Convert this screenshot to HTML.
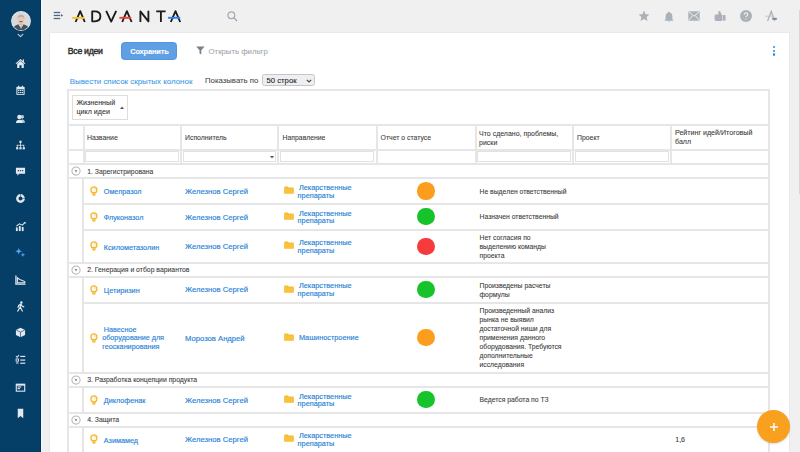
<!DOCTYPE html>
<html><head><meta charset="utf-8">
<style>
*{margin:0;padding:0;box-sizing:border-box}
html,body{width:800px;height:452px;overflow:hidden}
body{position:relative;background:#f0f0f0;font-family:"Liberation Sans",sans-serif;color:#333}
.a{position:absolute;display:block}
.t{position:absolute;white-space:nowrap;line-height:1;-webkit-text-stroke:0.08px currentColor}
.k{-webkit-text-stroke:0.14px currentColor}
</style></head><body>

<div class="a" style="left:0.00px;top:0.00px;width:41.00px;height:452.00px;background:#053e67"></div>
<div class="a" style="left:49.50px;top:32.50px;width:739.50px;height:427.50px;background:#fff;box-shadow:0 0 1px rgba(0,0,0,.18)"></div>
<div class="a" style="left:798.50px;top:10.00px;width:1.50px;height:184.00px;background:#d6d6d6"></div>
<div class="a" style="left:39.60px;top:0.00px;width:1.40px;height:452.00px;background:#03305d"></div>
<div class="a" style="left:41.00px;top:0.00px;width:1.00px;height:452.00px;background:#f8f8f8"></div>
<svg class="a" style="left:10.50px;top:11.00px;" width="20" height="20" viewBox="0 0 20 20"><defs><clipPath id="av"><circle cx="10" cy="10" r="9.3"/></clipPath></defs><circle cx="10" cy="10" r="9.9" fill="#eef0f2"/><g clip-path="url(#av)"><rect x="0" y="0" width="20" height="20" fill="#d7dadd"/><path d="M1.5 20 Q2.5 14.2 7 13.4 L13 13.4 Q17.5 14.2 18.5 20 Z" fill="#4b5056"/><path d="M7.6 13.4 L10 17.5 L12.4 13.4 Z" fill="#f4f4f4"/><path d="M9.5 14.2 L10.5 14.2 L10.6 17.4 L9.4 17.4Z" fill="#6f9cc8"/><rect x="8.6" y="11" width="2.8" height="2.8" fill="#dcb79e"/><ellipse cx="10" cy="8.7" rx="3.3" ry="3.9" fill="#e8c8b0"/><path d="M6.5 8.2 Q6.2 3.6 10 3.7 Q13.8 3.6 13.5 8.2 Q12.8 5.6 10 5.8 Q7.2 5.6 6.5 8.2Z" fill="#b9aea6"/><path d="M8.2 10.4 Q10 9.6 11.8 10.4 L11.6 11.3 Q10 10.7 8.4 11.3Z" fill="#6a5548"/></g></svg>
<svg class="a" style="left:16.90px;top:32.50px;" width="7" height="5" viewBox="0 0 7 5"><path d="M0.8 1 L3.5 3.6 L6.2 1" stroke="#a9bdd0" stroke-width="1.2" fill="none"/></svg>
<svg class="a" style="left:15.00px;top:58.10px;" width="11" height="11" viewBox="0 0 12 12"><path d="M6 1.2 L0.6 6 L1.6 6.6 L6 2.8 L10.4 6.6 L11.4 6 Z" fill="#e3e8ee"/><path d="M2.4 6.3 L6 3.4 L9.6 6.3 V11 H7.2 V8 H4.8 V11 H2.4Z" fill="#e3e8ee"/><rect x="8.4" y="1.6" width="1.4" height="2.6" fill="#e3e8ee"/></svg>
<svg class="a" style="left:15.00px;top:84.90px;" width="11" height="11" viewBox="0 0 12 12"><rect x="1.5" y="2" width="9" height="9" rx="0.8" fill="#e3e8ee"/><rect x="2.6" y="4.6" width="6.8" height="5.4" fill="#063f69"/><g fill="#e3e8ee"><rect x="3.2" y="5.2" width="1.5" height="1.3"/><rect x="5.25" y="5.2" width="1.5" height="1.3"/><rect x="7.3" y="5.2" width="1.5" height="1.3"/><rect x="3.2" y="7.6" width="1.5" height="1.3"/><rect x="5.25" y="7.6" width="1.5" height="1.3"/><rect x="7.3" y="7.6" width="1.5" height="1.3"/></g><rect x="3.3" y="0.8" width="1.2" height="2.2" fill="#e3e8ee"/><rect x="7.5" y="0.8" width="1.2" height="2.2" fill="#e3e8ee"/></svg>
<svg class="a" style="left:15.00px;top:112.50px;" width="11" height="11" viewBox="0 0 12 12"><circle cx="8" cy="4.2" r="2" fill="#e3e8ee" opacity=".8"/><path d="M5.5 10.5 Q6 7 8 7 Q10.4 7 11 10.5Z" fill="#e3e8ee" opacity=".8"/><circle cx="4.8" cy="4.4" r="2.4" fill="#e3e8ee"/><path d="M1 10.8 Q1.3 7.3 4.8 7.3 Q8.3 7.3 8.6 10.8Z" fill="#e3e8ee"/></svg>
<svg class="a" style="left:15.00px;top:139.50px;" width="11" height="11" viewBox="0 0 12 12"><g fill="#e3e8ee"><rect x="4.8" y="0.8" width="2.4" height="2.4"/><rect x="5.6" y="3" width="0.8" height="2.6"/><rect x="2" y="5.3" width="8" height="0.8"/><rect x="2" y="5.3" width="0.8" height="2.5"/><rect x="9.2" y="5.3" width="0.8" height="2.5"/><rect x="5.6" y="5.3" width="0.8" height="2.5"/><rect x="1.2" y="7.8" width="2.4" height="2.4"/><rect x="4.8" y="7.8" width="2.4" height="2.4"/><rect x="8.4" y="7.8" width="2.4" height="2.4"/></g></svg>
<svg class="a" style="left:15.00px;top:166.00px;" width="11" height="11" viewBox="0 0 12 12"><path d="M1 1.8 H11 V8.4 H4.6 L2.6 10.6 V8.4 H1Z" fill="#e3e8ee"/><g fill="#063f69"><rect x="3" y="4.5" width="1.4" height="1.2"/><rect x="5.3" y="4.5" width="1.4" height="1.2"/><rect x="7.6" y="4.5" width="1.4" height="1.2"/></g></svg>
<svg class="a" style="left:15.00px;top:193.30px;" width="11" height="11" viewBox="0 0 12 12"><circle cx="6" cy="6" r="3.5" stroke="#e3e8ee" stroke-width="2.6" fill="none"/><path d="M6 1 V4 M8 6 H11" stroke="#053e67" stroke-width="0.6"/></svg>
<svg class="a" style="left:15.00px;top:220.70px;" width="11" height="11" viewBox="0 0 12 12"><g fill="#e3e8ee"><rect x="1" y="7" width="2" height="4"/><rect x="4.2" y="5.5" width="2" height="5.5"/><rect x="7.4" y="6.5" width="2" height="4.5"/></g><path d="M1.5 5.5 L4.8 3 L8 4.6 L11 1.5" stroke="#e3e8ee" stroke-width="1.1" fill="none"/><path d="M9.2 1 H11.5 V3.3Z" fill="#e3e8ee"/></svg>
<svg class="a" style="left:15.00px;top:247.30px;" width="11" height="11" viewBox="0 0 12 12"><path d="M4 1 L5 3.6 L7.6 4.6 L5 5.6 L4 8.2 L3 5.6 L0.4 4.6 L3 3.6Z" fill="#4ea6f2"/><path d="M8.6 6 L9.3 7.8 L11.1 8.5 L9.3 9.2 L8.6 11 L7.9 9.2 L6.1 8.5 L7.9 7.8Z" fill="#4ea6f2"/></svg>
<svg class="a" style="left:15.00px;top:274.00px;" width="11" height="11" viewBox="0 0 12 12"><path d="M1 1.5 V11 H11.5" stroke="#e3e8ee" stroke-width="1.4" fill="none"/><path d="M2.6 9.6 V4.2 L5 6 L8 7.2 L10.6 8.2 V9.6Z" stroke="#e3e8ee" stroke-width="1.2" fill="none"/></svg>
<svg class="a" style="left:15.00px;top:300.50px;" width="11" height="11" viewBox="0 0 12 12"><circle cx="7" cy="1.6" r="1.3" fill="#e3e8ee"/><path d="M6.4 3.2 L4 4.8 L3.4 7 M6.4 3.2 L5.4 7.2 L3 11 M5.6 6.2 L8 11 M6.6 3.6 L7.6 5.6 L9.6 6.4" stroke="#e3e8ee" stroke-width="1.3" fill="none" stroke-linecap="round"/></svg>
<svg class="a" style="left:15.00px;top:327.30px;" width="11" height="11" viewBox="0 0 12 12"><path d="M6 0.8 L11 3.2 V8.8 L6 11.2 L1 8.8 V3.2Z" fill="#e3e8ee"/><path d="M1.4 3.4 L6 5.6 L10.6 3.4 M6 5.6 V11" stroke="#063f69" stroke-width="0.7" fill="none"/></svg>
<svg class="a" style="left:15.00px;top:354.30px;" width="11" height="11" viewBox="0 0 12 12"><path d="M1 2.4 L2.3 3.6 L4.4 1.2" stroke="#e3e8ee" stroke-width="1.1" fill="none"/><rect x="5.8" y="2" width="5.4" height="1.3" fill="#e3e8ee"/><rect x="1.2" y="5.4" width="2.6" height="2.4" stroke="#e3e8ee" stroke-width="1" fill="none"/><rect x="5.8" y="6" width="5.4" height="1.3" fill="#e3e8ee"/><rect x="1.2" y="9.2" width="2.6" height="1.2" fill="#e3e8ee"/><rect x="5.8" y="9.4" width="5.4" height="1.3" fill="#e3e8ee"/></svg>
<svg class="a" style="left:15.00px;top:381.50px;" width="11" height="11" viewBox="0 0 12 12"><rect x="0.8" y="1.8" width="10.4" height="8.8" fill="#e3e8ee"/><rect x="2" y="4" width="8" height="5.4" fill="#063f69"/><rect x="2.8" y="4.8" width="4" height="1.2" fill="#e3e8ee"/><rect x="2.8" y="6.6" width="2.6" height="1.2" fill="#e3e8ee"/></svg>
<svg class="a" style="left:15.00px;top:408.00px;" width="11" height="11" viewBox="0 0 12 12"><path d="M3 0.8 H9 V11.2 L6 8.6 L3 11.2Z" fill="#e3e8ee"/></svg>
<svg class="a" style="left:53.00px;top:11.10px;" width="11" height="9" viewBox="0 0 11 9"><g stroke="#4f6780" stroke-width="1.3" fill="none"><path d="M0.75 1.5 H7.2"/><path d="M0.75 4.45 H7.2"/><path d="M0.75 7.5 H7.2"/></g><path d="M8 3.1 L10.2 4.45 L8 5.8Z" fill="#4f6780"/></svg>
<svg class="a" style="left:0;top:0" width="200" height="32" viewBox="0 0 200 32"><g stroke="#1b1b1b" stroke-width="1.85" fill="none" stroke-linejoin="round" stroke-linecap="butt"><path d="M75.6 22 L80.2 11.2 L84.8 22"/><path d="M92.2 11.3 V21.3 H94.8 Q100.4 21.3 100.4 16.3 Q100.4 11.3 94.8 11.3Z"/><path d="M106.2 10.8 L111.2 21.6 L116.2 10.8"/><path d="M122.2 22 L126.9 11.2 L131.6 22"/><path d="M140.4 22 V11.4 L148.4 21.4 V10.8"/><path d="M156.2 11.3 H165.6 M160.9 11.3 V22"/><path d="M170.8 22 L175.5 11.2 L180.2 22"/></g><path d="M72.2 17.9 H84.2" stroke="#f6c31b" stroke-width="1.9"/><path d="M119.4 17.8 H131.2" stroke="#ef3e2e" stroke-width="1.9"/><path d="M168 17.8 H180.2" stroke="#2f7ff0" stroke-width="1.9"/></svg>
<svg class="a" style="left:227.00px;top:10.50px;" width="11" height="11" viewBox="0 0 11 11"><circle cx="4.3" cy="4.3" r="3.4" stroke="#a3acb5" stroke-width="1.3" fill="none"/><path d="M6.8 6.8 L10 10" stroke="#a3acb5" stroke-width="1.5"/></svg>
<svg class="a" style="left:638.00px;top:10.20px;" width="12" height="12" viewBox="0 0 12 12"><path d="M6 0.6 L7.6 4.2 L11.5 4.5 L8.6 7.1 L9.5 11 L6 8.9 L2.5 11 L3.4 7.1 L0.5 4.5 L4.4 4.2Z" fill="#aab1b9"/></svg>
<svg class="a" style="left:663.20px;top:10.80px;" width="12" height="12" viewBox="0 0 12 12"><path d="M6 0.8 Q6.9 0.8 7 1.8 Q9.4 2.5 9.4 5.8 V8.2 L10.8 9.8 H1.2 L2.6 8.2 V5.8 Q2.6 2.5 5 1.8 Q5.1 0.8 6 0.8Z" fill="#aab1b9"/><path d="M4.8 10.4 Q6 12 7.2 10.4Z" fill="#aab1b9"/></svg>
<svg class="a" style="left:688.00px;top:10.20px;" width="12" height="12" viewBox="0 0 12 12"><rect x="0.3" y="1.3" width="11.4" height="9.4" fill="#aab1b9"/><path d="M0.5 1.6 L6 6.2 L11.5 1.6 M0.5 10.4 L4.6 5.6 M11.5 10.4 L7.4 5.6" stroke="#f0f0f0" stroke-width="1.0" fill="none"/></svg>
<svg class="a" style="left:714.00px;top:10.20px;" width="12" height="12" viewBox="0 0 12 12"><rect x="8.7" y="5" width="2.8" height="5.6" fill="#aab1b9"/><path d="M0.6 6 Q0.6 4.6 2 4.6 H4.4 L4.3 2 Q4.3 1 5.3 1 Q6.3 1 6.5 2 L7.4 4.6 Q8.2 4.8 8.2 5.6 V10.2 Q8.2 11 7.4 11 H2 Q0.6 11 0.6 9.6Z" fill="#aab1b9"/></svg>
<svg class="a" style="left:739.80px;top:10.20px;" width="12" height="12" viewBox="0 0 12 12"><circle cx="6" cy="6" r="6" fill="#aab1b9"/><path d="M4.3 4.7 Q4.3 2.9 6 2.9 Q7.7 2.9 7.7 4.4 Q7.7 5.4 6.6 6 Q6 6.3 6 7.3" stroke="#f0f0f0" stroke-width="1.1" fill="none"/><circle cx="6" cy="9.1" r="0.7" fill="#f0f0f0"/></svg>
<svg class="a" style="left:765.20px;top:10.20px;" width="12" height="12" viewBox="0 0 12 12"><path d="M2.6 11 L6.2 1.4 L9.8 11" stroke="#aab1b9" stroke-width="1.3" fill="none"/><path d="M0.2 6.2 H7.4" stroke="#b9bfc6" stroke-width="0.8"/><rect x="7.2" y="7.8" width="4.6" height="2" fill="#7f8b97"/></svg>
<div class="t" style="left:67.80px;top:46.94px;font-size:8.7px;color:#2a2a2a;font-weight:normal;letter-spacing:-0.28px;-webkit-text-stroke:0.38px #2a2a2a">Все идеи</div>
<div class="a" style="left:121.20px;top:42.00px;width:56.00px;height:17.80px;background:#5f9fe3;border:1px solid #5196de;border-radius:3.5px"></div>
<div class="t" style="left:130.20px;top:48.19px;font-size:7.45px;color:#ffffff;font-weight:bold;letter-spacing:-0.15px;">Сохранить</div>
<svg class="a" style="left:195.60px;top:45.60px;" width="9" height="9" viewBox="0 0 9 9"><path d="M0.2 0.4 H8.6 L5.3 4.2 V8.6 L3.5 7.4 V4.2Z" fill="#75838f"/></svg>
<div class="t" style="left:208.60px;top:47.54px;font-size:7.75px;color:#a0a6ad;font-weight:normal;letter-spacing:0px;">Открыть фильтр</div>
<div class="a" style="left:772.80px;top:46.15px;width:2.30px;height:2.30px;background:#2190f0;border-radius:50%"></div>
<div class="a" style="left:772.80px;top:49.75px;width:2.30px;height:2.30px;background:#2190f0;border-radius:50%"></div>
<div class="a" style="left:772.80px;top:53.35px;width:2.30px;height:2.30px;background:#2190f0;border-radius:50%"></div>
<div class="t" style="left:69.70px;top:77.59px;font-size:7.93px;color:#3d9be6;font-weight:normal;letter-spacing:0px;">Вывести список скрытых колонок</div>
<div class="t" style="left:205.00px;top:77.21px;font-size:7.78px;color:#4a4a4a;font-weight:normal;letter-spacing:0px;">Показывать по</div>
<div class="a" style="left:262.20px;top:74.10px;width:52.60px;height:12.40px;background:#efeff1;border:1px solid #c6c6ca;border-radius:2.5px"></div>
<div class="t" style="left:266.50px;top:77.47px;font-size:7.72px;color:#222;font-weight:normal;letter-spacing:0px;">50 строк</div>
<svg class="a" style="left:305.60px;top:79.00px;" width="6" height="4" viewBox="0 0 6 4"><path d="M0.8 0.8 L3 3 L5.2 0.8" stroke="#4a4a4a" stroke-width="1.15" fill="none"/></svg>
<div class="a" style="left:68.00px;top:89.30px;width:701.30px;height:2px;background:#e6e6e6"></div>
<div class="a" style="left:67.00px;top:89.30px;width:2px;height:370.70px;background:#e6e6e6"></div>
<div class="a" style="left:768.30px;top:89.30px;width:2px;height:370.70px;background:#e6e6e6"></div>
<div class="a" style="left:71.90px;top:94.80px;width:56.10px;height:25.40px;border:1px solid #dedede;background:#fff"></div>
<div class="t" style="left:76.40px;top:99.85px;font-size:7.15px;color:#333;font-weight:normal;letter-spacing:0px;">Жизненный</div>
<div class="t" style="left:76.40px;top:108.55px;font-size:7.15px;color:#333;font-weight:normal;letter-spacing:0px;">цикл идеи</div>
<svg class="a" style="left:120.10px;top:105.60px;" width="4" height="3" viewBox="0 0 4 3"><path d="M0 3 L2 0.6 L4 3Z" fill="#555"/></svg>
<div class="a" style="left:68.00px;top:123.80px;width:701.30px;height:2px;background:#e6e6e6"></div>
<div class="a" style="left:68.00px;top:148.60px;width:701.30px;height:2px;background:#e6e6e6"></div>
<div class="a" style="left:68.00px;top:162.90px;width:701.30px;height:2px;background:#e6e6e6"></div>
<div class="a" style="left:82.50px;top:124.80px;width:2px;height:39.30px;background:#e6e6e6"></div>
<div class="a" style="left:180.30px;top:124.80px;width:2px;height:39.30px;background:#e6e6e6"></div>
<div class="a" style="left:277.40px;top:124.80px;width:2px;height:39.30px;background:#e6e6e6"></div>
<div class="a" style="left:375.60px;top:124.80px;width:2px;height:39.30px;background:#e6e6e6"></div>
<div class="a" style="left:474.50px;top:124.80px;width:2px;height:39.30px;background:#e6e6e6"></div>
<div class="a" style="left:571.90px;top:124.80px;width:2px;height:39.30px;background:#e6e6e6"></div>
<div class="a" style="left:670.00px;top:124.80px;width:2px;height:39.30px;background:#e6e6e6"></div>
<div class="t" style="left:87.00px;top:134.68px;font-size:6.88px;color:#3b3b3b;font-weight:normal;letter-spacing:0px;">Название</div>
<div class="t" style="left:185.00px;top:134.68px;font-size:6.88px;color:#3b3b3b;font-weight:normal;letter-spacing:0px;">Исполнитель</div>
<div class="t" style="left:282.50px;top:134.68px;font-size:6.88px;color:#3b3b3b;font-weight:normal;letter-spacing:0px;">Направление</div>
<div class="t" style="left:380.60px;top:134.68px;font-size:6.88px;color:#3b3b3b;font-weight:normal;letter-spacing:0px;">Отчет о статусе</div>
<div class="t" style="left:479.10px;top:130.49px;font-size:6.98px;color:#3b3b3b;font-weight:normal;letter-spacing:0px;">Что сделано, проблемы,</div>
<div class="t" style="left:479.10px;top:139.24px;font-size:6.98px;color:#3b3b3b;font-weight:normal;letter-spacing:0px;">риски</div>
<div class="t" style="left:577.00px;top:134.68px;font-size:6.88px;color:#3b3b3b;font-weight:normal;letter-spacing:0px;">Проект</div>
<div class="t" style="left:675.00px;top:130.29px;font-size:7.1px;color:#3b3b3b;font-weight:normal;letter-spacing:0px;">Рейтинг идей/Итоговый</div>
<div class="t" style="left:675.00px;top:138.99px;font-size:7.1px;color:#3b3b3b;font-weight:normal;letter-spacing:0px;">балл</div>
<div class="a" style="left:85.40px;top:151.30px;width:93.80px;height:11.10px;border:1px solid #e2e2e2;background:#fff"></div>
<div class="a" style="left:183.20px;top:151.30px;width:93.30px;height:11.10px;border:1px solid #e2e2e2;background:#fff"></div>
<svg class="a" style="left:269.50px;top:155.80px;" width="4" height="3" viewBox="0 0 4 3"><path d="M0 0 L4 0 L2 2.6Z" fill="#555"/></svg>
<div class="a" style="left:280.30px;top:151.30px;width:94.20px;height:11.10px;border:1px solid #e2e2e2;background:#fff"></div>
<div class="a" style="left:477.40px;top:151.30px;width:93.60px;height:11.10px;border:1px solid #e2e2e2;background:#fff"></div>
<div class="a" style="left:574.80px;top:151.30px;width:94.20px;height:11.10px;border:1px solid #e2e2e2;background:#fff"></div>
<div class="a" style="left:68.00px;top:162.90px;width:701.30px;height:2px;background:#e6e6e6"></div>
<div class="a" style="left:68.00px;top:177.25px;width:701.30px;height:2px;background:#e6e6e6"></div>
<svg class="a" style="left:70.80px;top:166.07px;" width="10" height="10" viewBox="0 0 10 10"><circle cx="5" cy="5" r="4.1" stroke="#b9b9b9" stroke-width="1.05" fill="none"/><path d="M3.4 3.6 L6.4 4.4 L5 6.6Z" fill="#8a8a8a"/></svg>
<div class="t" style="left:87.20px;top:168.58px;font-size:6.85px;color:#3a3a3a;font-weight:normal;letter-spacing:0px;">1. Зарегистрирована</div>
<div class="a" style="left:83.20px;top:202.70px;width:686.10px;height:2px;background:#e6e6e6"></div>
<div class="a" style="left:82.20px;top:178.25px;width:2px;height:25.45px;background:#e6e6e6"></div>
<svg class="a" style="left:90.00px;top:185.97px;" width="8" height="10" viewBox="0 0 8 10"><circle cx="3.9" cy="3.9" r="3.0" stroke="#f7b52b" stroke-width="1.25" fill="#fffaf0"/><path d="M2.3 6.2 H5.5 V9 Q5.5 9.8 3.9 9.8 Q2.3 9.8 2.3 9Z" fill="#f7b52b"/><path d="M2.4 7.9 H5.4" stroke="#fff4d8" stroke-width="0.45"/><path d="M4.0 2.2 Q5.4 2.3 5.5 3.6" stroke="#f7c04d" stroke-width="0.6" fill="none"/></svg>
<div class="t k" style="left:103.80px;top:188.46px;font-size:7.22px;color:#1f82d6;font-weight:normal;letter-spacing:0px;">Омепразол</div>
<div class="t k" style="left:185.00px;top:187.79px;font-size:7.66px;color:#1f82d6;font-weight:normal;letter-spacing:0px;">Железнов Сергей</div>
<svg class="a" style="left:284.30px;top:186.17px;" width="10" height="8" viewBox="0 0 10 8"><path d="M0.3 0.6 H3.8 L4.8 1.6 H9.7 V7.6 H0.3Z" fill="#f7bb33"/><rect x="0.3" y="2.4" width="9.4" height="5.2" fill="#f9c23c"/></svg>
<div class="t k" style="left:298.90px;top:183.72px;font-size:7.33px;color:#1f82d6;font-weight:normal;letter-spacing:0px;">Лекарственные</div>
<div class="t k" style="left:297.60px;top:191.62px;font-size:7.33px;color:#1f82d6;font-weight:normal;letter-spacing:0px;">препараты</div>
<div class="a" style="left:417.40px;top:182.38px;width:17.2px;height:17.2px;border-radius:50%;background:#fd9d1d"></div>
<div class="t" style="left:479.50px;top:188.50px;font-size:6.82px;color:#3a3a3a;font-weight:normal;letter-spacing:0px;">Не выделен ответственный</div>
<div class="a" style="left:83.20px;top:228.80px;width:686.10px;height:2px;background:#e6e6e6"></div>
<div class="a" style="left:82.20px;top:203.70px;width:2px;height:26.10px;background:#e6e6e6"></div>
<svg class="a" style="left:90.00px;top:211.75px;" width="8" height="10" viewBox="0 0 8 10"><circle cx="3.9" cy="3.9" r="3.0" stroke="#f7b52b" stroke-width="1.25" fill="#fffaf0"/><path d="M2.3 6.2 H5.5 V9 Q5.5 9.8 3.9 9.8 Q2.3 9.8 2.3 9Z" fill="#f7b52b"/><path d="M2.4 7.9 H5.4" stroke="#fff4d8" stroke-width="0.45"/><path d="M4.0 2.2 Q5.4 2.3 5.5 3.6" stroke="#f7c04d" stroke-width="0.6" fill="none"/></svg>
<div class="t k" style="left:103.80px;top:214.24px;font-size:7.22px;color:#1f82d6;font-weight:normal;letter-spacing:0px;">Флуконазол</div>
<div class="t k" style="left:185.00px;top:213.57px;font-size:7.66px;color:#1f82d6;font-weight:normal;letter-spacing:0px;">Железнов Сергей</div>
<svg class="a" style="left:284.30px;top:211.95px;" width="10" height="8" viewBox="0 0 10 8"><path d="M0.3 0.6 H3.8 L4.8 1.6 H9.7 V7.6 H0.3Z" fill="#f7bb33"/><rect x="0.3" y="2.4" width="9.4" height="5.2" fill="#f9c23c"/></svg>
<div class="t k" style="left:298.90px;top:209.50px;font-size:7.33px;color:#1f82d6;font-weight:normal;letter-spacing:0px;">Лекарственные</div>
<div class="t k" style="left:297.60px;top:217.40px;font-size:7.33px;color:#1f82d6;font-weight:normal;letter-spacing:0px;">препараты</div>
<div class="a" style="left:417.40px;top:208.15px;width:17.2px;height:17.2px;border-radius:50%;background:#16c32a"></div>
<div class="t" style="left:479.50px;top:214.28px;font-size:6.82px;color:#3a3a3a;font-weight:normal;letter-spacing:0px;">Назначен ответственный</div>
<div class="a" style="left:83.20px;top:261.60px;width:686.10px;height:2px;background:#e6e6e6"></div>
<div class="a" style="left:82.20px;top:229.80px;width:2px;height:32.80px;background:#e6e6e6"></div>
<svg class="a" style="left:90.00px;top:241.20px;" width="8" height="10" viewBox="0 0 8 10"><circle cx="3.9" cy="3.9" r="3.0" stroke="#f7b52b" stroke-width="1.25" fill="#fffaf0"/><path d="M2.3 6.2 H5.5 V9 Q5.5 9.8 3.9 9.8 Q2.3 9.8 2.3 9Z" fill="#f7b52b"/><path d="M2.4 7.9 H5.4" stroke="#fff4d8" stroke-width="0.45"/><path d="M4.0 2.2 Q5.4 2.3 5.5 3.6" stroke="#f7c04d" stroke-width="0.6" fill="none"/></svg>
<div class="t k" style="left:103.80px;top:243.69px;font-size:7.22px;color:#1f82d6;font-weight:normal;letter-spacing:0px;">Ксилометазолин</div>
<div class="t k" style="left:185.00px;top:243.02px;font-size:7.66px;color:#1f82d6;font-weight:normal;letter-spacing:0px;">Железнов Сергей</div>
<svg class="a" style="left:284.30px;top:241.40px;" width="10" height="8" viewBox="0 0 10 8"><path d="M0.3 0.6 H3.8 L4.8 1.6 H9.7 V7.6 H0.3Z" fill="#f7bb33"/><rect x="0.3" y="2.4" width="9.4" height="5.2" fill="#f9c23c"/></svg>
<div class="t k" style="left:298.90px;top:238.95px;font-size:7.33px;color:#1f82d6;font-weight:normal;letter-spacing:0px;">Лекарственные</div>
<div class="t k" style="left:297.60px;top:246.85px;font-size:7.33px;color:#1f82d6;font-weight:normal;letter-spacing:0px;">препараты</div>
<div class="a" style="left:417.40px;top:237.60px;width:17.2px;height:17.2px;border-radius:50%;background:#f73b3d"></div>
<div class="t" style="left:479.50px;top:234.65px;font-size:6.82px;color:#3a3a3a;font-weight:normal;letter-spacing:0px;">Нет согласия по</div>
<div class="t" style="left:479.50px;top:243.73px;font-size:6.82px;color:#3a3a3a;font-weight:normal;letter-spacing:0px;">выделению команды</div>
<div class="t" style="left:479.50px;top:252.81px;font-size:6.82px;color:#3a3a3a;font-weight:normal;letter-spacing:0px;">проекта</div>
<div class="a" style="left:68.00px;top:261.60px;width:701.30px;height:2px;background:#e6e6e6"></div>
<div class="a" style="left:68.00px;top:275.80px;width:701.30px;height:2px;background:#e6e6e6"></div>
<svg class="a" style="left:70.80px;top:264.70px;" width="10" height="10" viewBox="0 0 10 10"><circle cx="5" cy="5" r="4.1" stroke="#b9b9b9" stroke-width="1.05" fill="none"/><path d="M3.4 3.6 L6.4 4.4 L5 6.6Z" fill="#8a8a8a"/></svg>
<div class="t" style="left:87.20px;top:267.20px;font-size:6.85px;color:#3a3a3a;font-weight:normal;letter-spacing:0px;">2. Генерация и отбор вариантов</div>
<div class="a" style="left:83.20px;top:301.55px;width:686.10px;height:2px;background:#e6e6e6"></div>
<div class="a" style="left:82.20px;top:276.80px;width:2px;height:25.75px;background:#e6e6e6"></div>
<svg class="a" style="left:90.00px;top:284.68px;" width="8" height="10" viewBox="0 0 8 10"><circle cx="3.9" cy="3.9" r="3.0" stroke="#f7b52b" stroke-width="1.25" fill="#fffaf0"/><path d="M2.3 6.2 H5.5 V9 Q5.5 9.8 3.9 9.8 Q2.3 9.8 2.3 9Z" fill="#f7b52b"/><path d="M2.4 7.9 H5.4" stroke="#fff4d8" stroke-width="0.45"/><path d="M4.0 2.2 Q5.4 2.3 5.5 3.6" stroke="#f7c04d" stroke-width="0.6" fill="none"/></svg>
<div class="t k" style="left:103.80px;top:287.16px;font-size:7.22px;color:#1f82d6;font-weight:normal;letter-spacing:0px;">Цетиризин</div>
<div class="t k" style="left:185.00px;top:286.49px;font-size:7.66px;color:#1f82d6;font-weight:normal;letter-spacing:0px;">Железнов Сергей</div>
<svg class="a" style="left:284.30px;top:284.88px;" width="10" height="8" viewBox="0 0 10 8"><path d="M0.3 0.6 H3.8 L4.8 1.6 H9.7 V7.6 H0.3Z" fill="#f7bb33"/><rect x="0.3" y="2.4" width="9.4" height="5.2" fill="#f9c23c"/></svg>
<div class="t k" style="left:298.90px;top:282.42px;font-size:7.33px;color:#1f82d6;font-weight:normal;letter-spacing:0px;">Лекарственные</div>
<div class="t k" style="left:297.60px;top:290.32px;font-size:7.33px;color:#1f82d6;font-weight:normal;letter-spacing:0px;">препараты</div>
<div class="a" style="left:417.40px;top:281.07px;width:17.2px;height:17.2px;border-radius:50%;background:#16c32a"></div>
<div class="t" style="left:479.50px;top:282.66px;font-size:6.82px;color:#3a3a3a;font-weight:normal;letter-spacing:0px;">Произведены расчеты</div>
<div class="t" style="left:479.50px;top:291.74px;font-size:6.82px;color:#3a3a3a;font-weight:normal;letter-spacing:0px;">формулы</div>
<div class="a" style="left:83.20px;top:371.85px;width:686.10px;height:2px;background:#e6e6e6"></div>
<div class="a" style="left:82.20px;top:302.55px;width:2px;height:70.30px;background:#e6e6e6"></div>
<svg class="a" style="left:90.00px;top:332.70px;" width="8" height="10" viewBox="0 0 8 10"><circle cx="3.9" cy="3.9" r="3.0" stroke="#f7b52b" stroke-width="1.25" fill="#fffaf0"/><path d="M2.3 6.2 H5.5 V9 Q5.5 9.8 3.9 9.8 Q2.3 9.8 2.3 9Z" fill="#f7b52b"/><path d="M2.4 7.9 H5.4" stroke="#fff4d8" stroke-width="0.45"/><path d="M4.0 2.2 Q5.4 2.3 5.5 3.6" stroke="#f7c04d" stroke-width="0.6" fill="none"/></svg>
<div class="t k" style="left:103.80px;top:325.99px;font-size:7.22px;color:#1f82d6;font-weight:normal;letter-spacing:0px;">Навесное</div>
<div class="t k" style="left:102.20px;top:334.39px;font-size:7.22px;color:#1f82d6;font-weight:normal;letter-spacing:0px;">оборудование для</div>
<div class="t k" style="left:102.20px;top:342.79px;font-size:7.22px;color:#1f82d6;font-weight:normal;letter-spacing:0px;">геосканирования</div>
<div class="t k" style="left:185.00px;top:334.52px;font-size:7.66px;color:#1f82d6;font-weight:normal;letter-spacing:0px;">Морозов Андрей</div>
<svg class="a" style="left:284.30px;top:332.90px;" width="10" height="8" viewBox="0 0 10 8"><path d="M0.3 0.6 H3.8 L4.8 1.6 H9.7 V7.6 H0.3Z" fill="#f7bb33"/><rect x="0.3" y="2.4" width="9.4" height="5.2" fill="#f9c23c"/></svg>
<div class="t k" style="left:298.90px;top:334.10px;font-size:7.33px;color:#1f82d6;font-weight:normal;letter-spacing:0px;">Машиностроение</div>
<div class="a" style="left:417.40px;top:329.10px;width:17.2px;height:17.2px;border-radius:50%;background:#fd9d1d"></div>
<div class="t" style="left:479.50px;top:307.99px;font-size:6.82px;color:#3a3a3a;font-weight:normal;letter-spacing:0px;">Произведенный анализ</div>
<div class="t" style="left:479.50px;top:317.07px;font-size:6.82px;color:#3a3a3a;font-weight:normal;letter-spacing:0px;">рынка не выявил</div>
<div class="t" style="left:479.50px;top:326.15px;font-size:6.82px;color:#3a3a3a;font-weight:normal;letter-spacing:0px;">достаточной ниши для</div>
<div class="t" style="left:479.50px;top:335.23px;font-size:6.82px;color:#3a3a3a;font-weight:normal;letter-spacing:0px;">применения данного</div>
<div class="t" style="left:479.50px;top:344.31px;font-size:6.82px;color:#3a3a3a;font-weight:normal;letter-spacing:0px;">оборудования. Требуются</div>
<div class="t" style="left:479.50px;top:353.39px;font-size:6.82px;color:#3a3a3a;font-weight:normal;letter-spacing:0px;">дополнительные</div>
<div class="t" style="left:479.50px;top:362.47px;font-size:6.82px;color:#3a3a3a;font-weight:normal;letter-spacing:0px;">исследования</div>
<div class="a" style="left:68.00px;top:371.85px;width:701.30px;height:2px;background:#e6e6e6"></div>
<div class="a" style="left:68.00px;top:385.90px;width:701.30px;height:2px;background:#e6e6e6"></div>
<svg class="a" style="left:70.80px;top:374.88px;" width="10" height="10" viewBox="0 0 10 10"><circle cx="5" cy="5" r="4.1" stroke="#b9b9b9" stroke-width="1.05" fill="none"/><path d="M3.4 3.6 L6.4 4.4 L5 6.6Z" fill="#8a8a8a"/></svg>
<div class="t" style="left:87.20px;top:377.38px;font-size:6.85px;color:#3a3a3a;font-weight:normal;letter-spacing:0px;">3. Разработка концепции продукта</div>
<div class="a" style="left:83.20px;top:411.60px;width:686.10px;height:2px;background:#e6e6e6"></div>
<div class="a" style="left:82.20px;top:386.90px;width:2px;height:25.70px;background:#e6e6e6"></div>
<svg class="a" style="left:90.00px;top:394.75px;" width="8" height="10" viewBox="0 0 8 10"><circle cx="3.9" cy="3.9" r="3.0" stroke="#f7b52b" stroke-width="1.25" fill="#fffaf0"/><path d="M2.3 6.2 H5.5 V9 Q5.5 9.8 3.9 9.8 Q2.3 9.8 2.3 9Z" fill="#f7b52b"/><path d="M2.4 7.9 H5.4" stroke="#fff4d8" stroke-width="0.45"/><path d="M4.0 2.2 Q5.4 2.3 5.5 3.6" stroke="#f7c04d" stroke-width="0.6" fill="none"/></svg>
<div class="t k" style="left:103.80px;top:397.24px;font-size:7.22px;color:#1f82d6;font-weight:normal;letter-spacing:0px;">Диклофенак</div>
<div class="t k" style="left:185.00px;top:396.57px;font-size:7.66px;color:#1f82d6;font-weight:normal;letter-spacing:0px;">Железнов Сергей</div>
<svg class="a" style="left:284.30px;top:394.95px;" width="10" height="8" viewBox="0 0 10 8"><path d="M0.3 0.6 H3.8 L4.8 1.6 H9.7 V7.6 H0.3Z" fill="#f7bb33"/><rect x="0.3" y="2.4" width="9.4" height="5.2" fill="#f9c23c"/></svg>
<div class="t k" style="left:298.90px;top:392.50px;font-size:7.33px;color:#1f82d6;font-weight:normal;letter-spacing:0px;">Лекарственные</div>
<div class="t k" style="left:297.60px;top:400.40px;font-size:7.33px;color:#1f82d6;font-weight:normal;letter-spacing:0px;">препараты</div>
<div class="a" style="left:417.40px;top:391.15px;width:17.2px;height:17.2px;border-radius:50%;background:#16c32a"></div>
<div class="t" style="left:479.50px;top:397.28px;font-size:6.82px;color:#3a3a3a;font-weight:normal;letter-spacing:0px;">Ведется работа по ТЗ</div>
<div class="a" style="left:68.00px;top:411.60px;width:701.30px;height:2px;background:#e6e6e6"></div>
<div class="a" style="left:68.00px;top:425.60px;width:701.30px;height:2px;background:#e6e6e6"></div>
<svg class="a" style="left:70.80px;top:414.60px;" width="10" height="10" viewBox="0 0 10 10"><circle cx="5" cy="5" r="4.1" stroke="#b9b9b9" stroke-width="1.05" fill="none"/><path d="M3.4 3.6 L6.4 4.4 L5 6.6Z" fill="#8a8a8a"/></svg>
<div class="t" style="left:87.20px;top:417.10px;font-size:6.85px;color:#3a3a3a;font-weight:normal;letter-spacing:0px;">4. Защита</div>
<div class="a" style="left:82.20px;top:426.60px;width:2px;height:33.40px;background:#e6e6e6"></div>
<svg class="a" style="left:90.00px;top:434.10px;" width="8" height="10" viewBox="0 0 8 10"><circle cx="3.9" cy="3.9" r="3.0" stroke="#f7b52b" stroke-width="1.25" fill="#fffaf0"/><path d="M2.3 6.2 H5.5 V9 Q5.5 9.8 3.9 9.8 Q2.3 9.8 2.3 9Z" fill="#f7b52b"/><path d="M2.4 7.9 H5.4" stroke="#fff4d8" stroke-width="0.45"/><path d="M4.0 2.2 Q5.4 2.3 5.5 3.6" stroke="#f7c04d" stroke-width="0.6" fill="none"/></svg>
<div class="t k" style="left:103.80px;top:436.59px;font-size:7.22px;color:#1f82d6;font-weight:normal;letter-spacing:0px;">Азимамед</div>
<div class="t k" style="left:185.00px;top:435.92px;font-size:7.66px;color:#1f82d6;font-weight:normal;letter-spacing:0px;">Железнов Сергей</div>
<svg class="a" style="left:284.30px;top:434.30px;" width="10" height="8" viewBox="0 0 10 8"><path d="M0.3 0.6 H3.8 L4.8 1.6 H9.7 V7.6 H0.3Z" fill="#f7bb33"/><rect x="0.3" y="2.4" width="9.4" height="5.2" fill="#f9c23c"/></svg>
<div class="t k" style="left:298.90px;top:432.05px;font-size:7.33px;color:#1f82d6;font-weight:normal;letter-spacing:0px;">Лекарственные</div>
<div class="t k" style="left:297.60px;top:439.95px;font-size:7.33px;color:#1f82d6;font-weight:normal;letter-spacing:0px;">препараты</div>
<div class="t" style="left:675.20px;top:436.99px;font-size:7.1px;color:#3a3a3a;font-weight:normal;letter-spacing:0px;">1,6</div>

<div class="a" style="left:757px;top:410px;width:33.4px;height:33.4px;border-radius:50%;background:#f9a01e;box-shadow:0 1px 2px rgba(0,0,0,.15)"></div>
<svg class="a" style="left:768.70px;top:421.80px;" width="10" height="10" viewBox="0 0 10 10"><path d="M5 1 V9 M1 5 H9" stroke="#fff" stroke-width="1.5"/></svg>
</body></html>
